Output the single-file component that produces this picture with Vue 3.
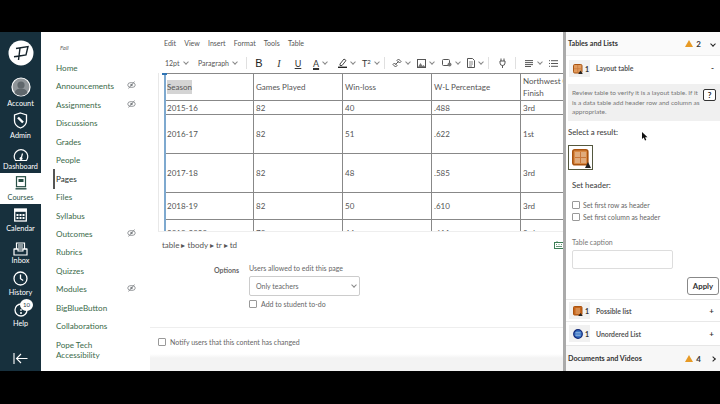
<script setup>
const navItems = [
  { t: 'Home' }, { t: 'Announcements', off: true }, { t: 'Assignments', off: true }, { t: 'Discussions' },
  { t: 'Grades' }, { t: 'People' }, { t: 'Pages', active: true }, { t: 'Files' }, { t: 'Syllabus' },
  { t: 'Outcomes', off: true }, { t: 'Rubrics' }, { t: 'Quizzes' }, { t: 'Modules', off: true },
  { t: 'BigBlueButton' }, { t: 'Collaborations' }
]
const rows = [
  { cls: 'r1', c: ['Season', 'Games Played', 'Win-loss', 'W-L Percentage', 'Northwest Conference Finish'] },
  { cls: 'r2', c: ['2015-16', '82', '40', '.488', '3rd'] },
  { cls: 'r3', c: ['2016-17', '82', '51', '.622', '1st'] },
  { cls: 'r3', c: ['2017-18', '82', '48', '.585', '3rd'] },
  { cls: 'r4', c: ['2018-19', '82', '50', '.610', '3rd'] },
  { cls: 'r4', c: ['2019-2020', '70', '44', '.611', '3rd'] }
]
</script>

<template>
  <div class="screen">
    <div class="bar"></div>
    <div class="app">
      <aside class="global">
        <div class="logo">
          <svg width="26" height="26" viewBox="0 0 26 26"><circle cx="13" cy="13" r="12.5" fill="#fff"/><path d="M8 8.500 20 6.500 18 15 8.500 16.500M12 8 10.500 20M6 16.800 13 15.800" fill="none" stroke="#16242c" stroke-width="1.400"/></svg>
        </div>
        <div class="gitem account">
          <svg width="20" height="20" viewBox="0 0 20 20"><circle cx="10" cy="10" r="9" fill="#8f9599" stroke="#fff" stroke-width="1.200"/><circle cx="10" cy="8" r="3.600" fill="#5f676c"/><path d="M3.500 16c1-3.500 3.500-4.500 6.500-4.500s5.500 1 6.500 4.500a9 9 0 0 1-13 0z" fill="#5f676c"/></svg>
          <span>Account</span>
        </div>
        <div class="gitem admin">
          <svg width="15" height="17" viewBox="0 0 15 17"><path d="M7.500 1 13.500 3v6c0 3.500-3 5.800-6 7-3-1.200-6-3.500-6-7V3z" fill="none" stroke="#fff" stroke-width="1.300"/><path d="M5 5.500 10 10.500" stroke="#fff" stroke-width="2.400"/></svg>
          <span>Admin</span>
        </div>
        <div class="gitem dash">
          <svg width="16" height="13" viewBox="0 0 16 13"><path d="M2.500 11.500A6.800 6.800 0 1 1 13.500 11.500Z" fill="none" stroke="#fff" stroke-width="1.200"/><path d="M8 10 9.500 4.500" stroke="#fff" stroke-width="1.200"/><circle cx="8" cy="9.500" r="1.500" fill="#fff"/></svg>
          <span>Dashboard</span>
        </div>
        <div class="gitem courses">
          <svg width="12" height="14" viewBox="0 0 12 14"><rect x="1.500" y=".7" width="9" height="10" fill="none" stroke="#274f45" stroke-width="1.200"/><rect x="3.500" y="3" width="5" height="3" fill="#274f45"/><path d="M.5 12.800H11.500" stroke="#274f45" stroke-width="1.400"/></svg>
          <span>Courses</span>
        </div>
        <div class="gitem cal">
          <svg width="13" height="14" viewBox="0 0 13 14"><rect x=".7" y="1" width="11.600" height="12" fill="none" stroke="#fff" stroke-width="1.300"/><rect x=".7" y="1" width="11.600" height="2.800" fill="#fff"/><path d="M2.500 6h2v2h-2zM5.500 6h2v2h-2zM8.500 6h2v2h-2zM2.500 9h2v2h-2zM5.500 9h2v2h-2zM8.500 9h2v2h-2z" fill="#fff"/></svg>
          <span>Calendar</span>
        </div>
        <div class="gitem inbox">
          <svg width="15" height="14" viewBox="0 0 15 14"><path d="M3.500 7V1h8v6M1 7h13v6H1z" fill="none" stroke="#fff" stroke-width="1.200"/><path d="M5 3h5M5 5h5M1 7h4v2h5V7h4" fill="none" stroke="#fff" stroke-width="1.100"/></svg>
          <span>Inbox</span>
        </div>
        <div class="gitem hist">
          <svg width="15" height="15" viewBox="0 0 15 15"><circle cx="7.500" cy="7.500" r="6.500" fill="none" stroke="#fff" stroke-width="1.300"/><path d="M7.500 3.500v4.200l2.700 1.800" fill="none" stroke="#fff" stroke-width="1.300"/></svg>
          <span>History</span>
        </div>
        <div class="gitem help">
          <svg width="14" height="14" viewBox="0 0 14 14"><circle cx="7" cy="7" r="6" fill="none" stroke="#fff" stroke-width="1.300"/><circle cx="7" cy="10" r="1" fill="#fff"/><path d="M7 8V6" stroke="#fff" stroke-width="1.200"/></svg>
          <b class="badge">10</b>
          <span>Help</span>
        </div>
        <div class="collapse">
          <svg width="15" height="11" viewBox="0 0 15 11"><path d="M1 0V11M14.500 5.500H3.500M8 1 3.500 5.500 8 10" fill="none" stroke="#fff" stroke-width="1.100"/></svg>
        </div>
      </aside>

      <nav class="course">
        <div class="term">Fall</div>
        <a v-for="n in navItems" :key="n.t" class="nitem" :class="{ active: n.active }">
          {{ n.t }}
          <svg v-if="n.off" class="eye" width="9" height="8" viewBox="0 0 9 8"><ellipse cx="4.500" cy="4" rx="3.800" ry="2.500" fill="none" stroke="#7d8285" stroke-width=".8"/><circle cx="4.500" cy="4" r="1.200" fill="#7d8285"/><path d="M1.500 7.500 7.500.5" stroke="#7d8285" stroke-width=".8"/></svg>
        </a>
        <a class="nitem wrap">Pope Tech Accessibility</a>
      </nav>

      <main class="editor">
        <div class="menu">
          <span>Edit</span><span>View</span><span>Insert</span><span>Format</span><span>Tools</span><span>Table</span>
        </div>
        <div class="tools">
          <span class="cell w33">12pt<i class="chev"></i></span>
          <span class="cell w48">Paragraph<i class="chev"></i></span>
          <i class="sep"></i>
          <span class="cell w24 mid"><b class="bold">B</b></span>
          <span class="cell w16 mid"><em class="ital">I</em></span>
          <span class="cell w22 mid"><span class="und">U</span></span>
          <span class="cell w29 p4"><span class="col">A</span><i class="chev"></i></span>
          <span class="cell w24">
            <svg width="9" height="10" viewBox="0 0 9 10"><path d="M2 6 6 1l2 1.500-4 5H2z" fill="none" stroke="#333" stroke-width=".9"/><path d="M0 9.300h9" stroke="#222" stroke-width="1.400"/></svg><i class="chev"></i>
          </span>
          <span class="cell w22 sup">T<small>2</small><i class="chev"></i></span>
          <i class="sep"></i>
          <span class="cell w30 p7">
            <svg width="10" height="10" viewBox="0 0 10 10"><path d="M1 6.500 3.500 9 5 7.500 2.500 5zM5 2.500 7.500 5 9 3.500 6.500 1zM3.500 6.500l3-3" fill="none" stroke="#444" stroke-width=".9"/></svg><i class="chev"></i>
          </span>
          <span class="cell w25 p2">
            <svg width="9" height="9" viewBox="0 0 9 9"><rect x=".5" y=".5" width="8" height="8" fill="none" stroke="#555"/><path d="M1 8 3.500 4l2 3 1-1 2 2" fill="#777"/></svg><i class="chev"></i>
          </span>
          <span class="cell w25 p2">
            <svg width="10" height="8" viewBox="0 0 10 8"><rect x=".5" y=".5" width="7" height="6" rx="1" fill="none" stroke="#555"/><circle cx="7.500" cy="5.500" r="2" fill="#777"/></svg><i class="chev"></i>
          </span>
          <span class="cell w23 p2">
            <svg width="8" height="10" viewBox="0 0 8 10"><path d="M.5.500h5l2 2v7H.5z" fill="none" stroke="#555"/><path d="M2 4h4M2 6h4M2 8h3" stroke="#555" stroke-width=".7"/></svg><i class="chev"></i>
          </span>
          <i class="sep"></i>
          <span class="cell w26 p9">
            <svg width="9" height="10" viewBox="0 0 9 10"><path d="M2 3h5v2a2.500 2.500 0 0 1-5 0zM3 3V.5M6 3V.5M4.500 7.500V10" fill="none" stroke="#444" stroke-width=".9"/></svg>
          </span>
          <i class="sep"></i>
          <span class="cell w28 p9">
            <svg width="9" height="7" viewBox="0 0 9 7"><path d="M0 .6h8M0 2.600h8M0 4.600h8M0 6.500h6" stroke="#444" stroke-width=".9"/></svg><i class="chev"></i>
          </span>
          <span class="cell w18 p5">
            <svg width="9" height="7" viewBox="0 0 9 7"><path d="M2 .7h7M2 3.500h7M2 6.300h7M0 .7h1M0 3.500h1M0 6.300h1" stroke="#444" stroke-width=".9"/></svg>
          </span>
        </div>
        <div class="doc-area">
          <div class="handle"></div>
          <table class="grid">
            <colgroup><col class="w-col"><col class="w-col"><col class="w-col"><col class="w-col"><col class="w-last"></colgroup>
            <tr v-for="r in rows" :key="r.c[0]" :class="r.cls">
              <td v-for="(c, i) in r.c" :key="i"><mark v-if="c === 'Season'">{{ c }}</mark><template v-else>{{ c }}</template></td>
            </tr>
          </table>
        </div>
        <div class="status">
          <span>table ▸ tbody ▸ tr ▸ td</span>
          <svg width="10" height="8" viewBox="0 0 10 8"><rect x=".5" y="1.500" width="9" height="6" fill="none" stroke="#3c7d55"/><path d="M2 3.500h1M4.500 3.500h1M7 3.500h1M2 5.500h6M3 0v1.500" stroke="#3c7d55" stroke-width=".8"/></svg>
        </div>
        <section class="options">
          <div class="olabel">Options</div>
          <div class="ofields">
            <div class="otitle">Users allowed to edit this page</div>
            <div class="select">Only teachers<i class="chev"></i></div>
            <label class="check"><i class="box"></i>Add to student to-do</label>
          </div>
        </section>
        <div class="notify"><label class="check"><i class="box"></i>Notify users that this content has changed</label></div>
      </main>

      <aside class="panel">
        <header class="phead"><span>Tables and Lists</span><span class="count"><i class="warn"></i>2<i class="ar down"></i></span></header>
        <div class="issue open">
          <span class="chip">
            <svg width="10" height="10" viewBox="0 0 10 10"><rect x=".5" y=".5" width="8.500" height="8.500" rx="1.200" fill="#e09a5c" stroke="#a9530f"/><path d="M4.700 1v8M1 4.700h8" stroke="#c9773a" stroke-width=".7"/><path d="M7.500 6.500 9.800 10H5.200z" fill="#222"/></svg>1
          </span><span class="iname">Layout table</span><span class="mark">-</span>
        </div>
        <div class="note">
          <p>Review table to verify it is a layout table. If it is a data table add header row and column as appropriate.</p>
          <b class="q">?</b>
        </div>
        <div class="sr">Select a result:</div>
        <div class="thumb">
          <svg width="18" height="18" viewBox="0 0 18 18"><rect x=".8" y=".8" width="15" height="15" rx="2" fill="#d98a45" stroke="#a9530f" stroke-width="1.600"/><path d="M3 3h11v11H3z" fill="#e0ab7c"/><path d="M8.500 3v11M3 8.500h11" stroke="#c9773a" stroke-width="1"/></svg>
          <i class="minwarn"></i>
        </div>
        <div class="sh">Set header:</div>
        <label class="pcheck first"><i class="box"></i>Set first row as header</label>
        <label class="pcheck"><i class="box"></i>Set first column as header</label>
        <div class="capl">Table caption</div>
        <div class="capi"></div>
        <div class="applyrow"><button class="apply">Apply</button></div>
        <div class="issue line l1">
          <span class="chip">
            <svg width="10" height="10" viewBox="0 0 10 10"><rect x=".5" y=".5" width="8.500" height="8.500" rx="1" fill="#c7651b" stroke="#a9530f"/><path d="M2.500 3h4.500M2.500 5h4.500M2.500 7h4.500" stroke="#f0c9a0" stroke-width=".8"/><path d="M7.500 7 9.800 10H5.200z" fill="#222"/></svg>1
          </span><span class="iname">Possible list</span><span class="mark">+</span>
        </div>
        <div class="issue line l2">
          <span class="chip">
            <svg width="10" height="10" viewBox="0 0 10 10"><circle cx="5" cy="5" r="4.300" fill="#3a74c4" stroke="#12297a" stroke-width="1.200"/><path d="M2.500 3.500h5M2.500 5h5M2.500 6.500h5" stroke="#a9c6ea" stroke-width=".6"/></svg>1
          </span><span class="iname">Unordered List</span><span class="mark">+</span>
        </div>
        <footer class="pfoot"><span>Documents and Videos</span><span class="count"><i class="warn"></i>4<i class="ar right"></i></span></footer>
      </aside>
    </div>
    <div class="bar bottom"></div>
    <svg class="cursor" width="6" height="9" viewBox="0 0 6 9"><path d="M0 0v7l1.700-1.500L3 8.500l1.300-.6-1.200-2.700H5.500z" fill="#111"/></svg>
  </div>
</template>

<style>
html, body { margin: 0; background: #000; }
</style>

<style scoped>
.screen { width: 720px; height: 404px; position: relative; overflow: hidden; background: #000; font-family: Lato, "Open Sans", sans-serif; color: #444; display: flex; flex-direction: column; }
.bar { height: 32px; background: #000; flex: none; }
.bar.bottom { height: 33px; }
.app { height: 339px; flex: none; display: flex; background: #fff; overflow: hidden; }

.global { width: 41px; flex: none; background: #17303d; color: #fff; display: flex; flex-direction: column; align-items: center; font-size: 7.300px; padding-top: 8px; box-sizing: border-box; }
.logo { height: 26px; margin-bottom: 11px; }
.gitem { width: 100%; display: flex; flex-direction: column; align-items: center; position: relative; line-height: 10px; flex: none; }
.gitem span { white-space: nowrap; }
.account { height: 35px; }
.account span { margin-top: 2px; }
.admin { height: 32px; }
.admin span { margin-top: 2px; }
.dash { height: 24px; margin-top: 5px; }
.courses { background: #fff; color: #2b5346; height: 31px; padding-top: 3px; box-sizing: border-box; }
.courses span { margin-top: 3px; }
.cal { height: 38px; padding-top: 4px; box-sizing: border-box; }
.cal span { margin-top: 2px; }
.inbox { height: 29px; }
.hist { height: 32px; }
.hist span { margin-top: 2px; }
.help { height: 30px; }
.help span { margin-top: 2px; }
.badge { position: absolute; left: 20px; top: -4px; width: 13px; height: 12px; border-radius: 50%; background: #fff; color: #1f3a46; font-size: 6px; font-weight: 400; text-align: center; line-height: 12px; }
.collapse { margin-top: 20px; }

.course { width: 109px; flex: none; padding: 11px 0 0 15px; box-sizing: border-box; position: relative; }
.term { font-size: 6px; font-style: italic; color: #666; height: 16px; line-height: 10px; margin-left: 4px; }
.nitem { display: block; height: 18.450px; line-height: 18.450px; font-size: 8.100px; color: #3b6a4a; position: relative; white-space: nowrap; }
.nitem.active { color: #26302a; }
.nitem.active::before { content: ""; position: absolute; left: -3px; top: -1px; bottom: -1px; width: 1.500px; background: #555; }
.nitem.wrap { white-space: normal; line-height: 10.500px; height: auto; width: 70px; padding-top: 4px; }
.eye { position: absolute; left: 71px; top: 4px; }

.editor { width: 413px; flex: none; display: flex; flex-direction: column; }
.menu { display: flex; gap: 8.200px; height: 21px; flex: none; align-items: center; font-size: 7px; color: #555; padding: 0 0 0 14px; }
.tools { height: 20px; display: flex; align-items: center; font-size: 7px; color: #555; padding-left: 15px; white-space: nowrap; flex: none; }
.cell { display: flex; align-items: center; flex: none; box-sizing: border-box; }
.mid { justify-content: center; }
.w16 { width: 16px; } .w18 { width: 18px; } .w22 { width: 22px; } .w23 { width: 23px; } .w24 { width: 24px; } .w25 { width: 25px; }
.w26 { width: 26px; } .w28 { width: 28px; } .w29 { width: 29px; } .w30 { width: 30px; } .w33 { width: 33px; } .w48 { width: 48px; }
.p2 { padding-left: 2px; } .p4 { padding-left: 4px; } .p5 { padding-left: 5px; } .p7 { padding-left: 7px; } .p9 { padding-left: 9px; }
.chev { display: inline-block; width: 3px; height: 3px; border: solid #888; border-width: 0 .8px .8px 0; transform: rotate(45deg); margin: 0 0 2px 4px; flex: none; }
.sep { width: 1px; height: 12px; background: #e0e0e0; flex: none; }
.bold { font-size: 11px; font-weight: 500; color: #222; font-family: "Liberation Sans", sans-serif; }
.ital { font-size: 10px; color: #333; font-family: "Liberation Serif", serif; }
.und { font-size: 9px; color: #333; text-decoration: underline; }
.col { font-size: 9px; color: #333; text-decoration: underline; text-decoration-thickness: 1.500px; }
.sup { font-size: 9px; color: #333; }
.sup small { font-size: 6px; margin-bottom: 4px; }

.doc-area { height: 159px; flex: none; overflow: hidden; position: relative; margin-left: 8px; border-left: 1px solid #e8e8e8; border-bottom: 1px solid #eee; box-sizing: border-box; }
.handle { position: absolute; left: 5px; top: 0; bottom: 0; width: 1.500px; background: #7ea9cf; z-index: 1; }
.handle::before { content: ""; position: absolute; left: -2px; top: 0; width: 5px; height: 2px; background: #2f74b5; }
.grid { border-collapse: collapse; table-layout: fixed; width: 456px; margin-left: 5px; font-size: 8px; color: #555; }
.w-col { width: 89px; } .w-last { width: 100px; }
.grid td { border: 1px solid #888; padding: 0 2px; line-height: 12px; overflow: hidden; vertical-align: middle; }
.grid tr:first-child td { border-top-color: #bbb; }
.r1 td { height: 26px; }
.r2 td { height: 13px; }
.r3 td { height: 38px; }
.r4 td { height: 26px; }
mark { background: #d4d4d4; color: #555; padding: 2px 0; }

.status { height: 26px; flex: none; display: flex; justify-content: space-between; align-items: center; padding: 0 0 0 12px; font-size: 8px; color: #555; }
.status svg { margin-right: -1px; }
.options { display: flex; height: 70px; flex: none; border-bottom: 1px solid #eee; box-sizing: border-box; padding-top: 5px; font-size: 7px; color: #666; }
.olabel { width: 99px; text-align: right; padding-right: 10px; box-sizing: border-box; font-weight: 700; padding-top: 3px; }
.otitle { line-height: 11px; }
.select { width: 111px; height: 20px; border: 1px solid #ccc; border-radius: 2px; margin-top: 2px; box-sizing: border-box; display: flex; justify-content: space-between; align-items: center; padding: 0 3px 0 6px; }
.check { display: flex; align-items: center; gap: 4px; margin-top: 3px; white-space: nowrap; line-height: 10px; }
.box { width: 6px; height: 6px; border: 1px solid #999; border-radius: 1px; background: #fff; flex: none; }
.notify { flex: 1; padding-left: 8px; font-size: 7px; color: #666; background: linear-gradient(#fff 26px, #f3f3f3 30px); }
.notify .check { margin-top: 9px; }

.panel { width: 157px; flex: none; border-left: 3px solid #aaa; box-sizing: border-box; display: flex; flex-direction: column; background: #fff; font-size: 7px; color: #444; }
.phead, .pfoot { display: flex; justify-content: space-between; align-items: center; flex: none; font-weight: 700; font-size: 7.200px; color: #333; padding: 0 5px 0 2px; background: #f7f7f7; }
.phead { height: 24px; border-bottom: 1px solid #eee; background: #fafafa; box-sizing: border-box; }
.pfoot { height: 26px; border-top: 1px solid #e6e6e6; box-sizing: border-box; }
.count { display: flex; align-items: center; gap: 3px; font-size: 8px; }
.warn { width: 0; height: 0; border-left: 4px solid transparent; border-right: 4px solid transparent; border-bottom: 7px solid #e79a25; }
.ar { width: 3px; height: 3px; border: solid #222; border-width: 0 1.200px 1.200px 0; margin-left: 7px; }
.ar.down { transform: rotate(45deg); }
.ar.right { transform: rotate(-45deg); }
.issue { display: flex; align-items: center; flex: none; padding: 0 5px 0 3px; box-sizing: border-box; }
.issue.open { height: 28px; align-items: flex-start; padding-top: 4px; }
.issue.open .iname, .issue.open .mark { line-height: 17px; }
.issue.line { border-top: 1px solid #e8e8e8; }
.l1 { height: 22px; }
.l2 { height: 24px; }
.chip { width: 21px; height: 17px; background: #f1f1f1; display: flex; align-items: center; gap: 2px; padding-left: 4px; box-sizing: border-box; font-weight: 700; font-size: 7px; color: #333; }
.chip svg { flex: none; }
.iname { margin-left: 6px; font-weight: 700; font-size: 6.800px; color: #555; flex: 1; }
.mark { font-size: 8px; font-weight: 700; color: #333; margin-right: 1px; }
.note { margin-left: 2px; width: 152px; height: 37px; background: #f0f0f0; flex: none; display: flex; box-sizing: border-box; padding: 4px 4px 0 4px; gap: 3px; }
.note p { margin: 0; font-size: 6.500px; line-height: 9.600px; color: #777; width: 128px; flex: none; }
.q { width: 11px; height: 10px; border: 1px solid #333; border-radius: 2px; background: #fff; text-align: center; font-size: 8px; line-height: 10px; margin-top: 1px; color: #222; flex: none; }
.sr { margin: 6px 0 0 2px; font-size: 7.800px; line-height: 10px; color: #444; font-weight: 500; flex: none; }
.thumb { width: 25px; height: 25px; margin: 8px 0 0 2px; border: 1px solid #54583f; box-sizing: border-box; position: relative; display: flex; align-items: center; justify-content: center; flex: none; }
.minwarn { position: absolute; right: 1px; bottom: 1px; width: 0; height: 0; border-left: 3.500px solid transparent; border-right: 3.500px solid transparent; border-bottom: 6px solid #222; }
.sh { margin: 10px 0 0 6px; font-size: 7.800px; color: #444; font-weight: 500; line-height: 10px; flex: none; }
.pcheck { display: flex; align-items: center; gap: 3px; margin: 0 0 0 6px; height: 12px; font-size: 6.800px; color: #666; white-space: nowrap; flex: none; }
.pcheck.first { margin-top: 9px; }
.capl { margin: 13.500px 0 0 6px; font-size: 7px; color: #777; line-height: 10px; flex: none; }
.capi { width: 101px; height: 19px; border: 1px solid #ddd; border-radius: 2px; margin: 3.500px 0 0 6px; box-sizing: border-box; flex: none; }
.applyrow { display: flex; justify-content: flex-end; padding-right: 1px; margin-top: 8px; height: 18px; margin-bottom: 4px; flex: none; }
.apply { width: 32px; height: 18px; border: 1px solid #888; border-radius: 3px; background: #fff; font: 700 7.800px Lato, sans-serif; color: #333; padding: 0; }

.cursor { position: absolute; left: 642px; top: 132px; }
</style>
